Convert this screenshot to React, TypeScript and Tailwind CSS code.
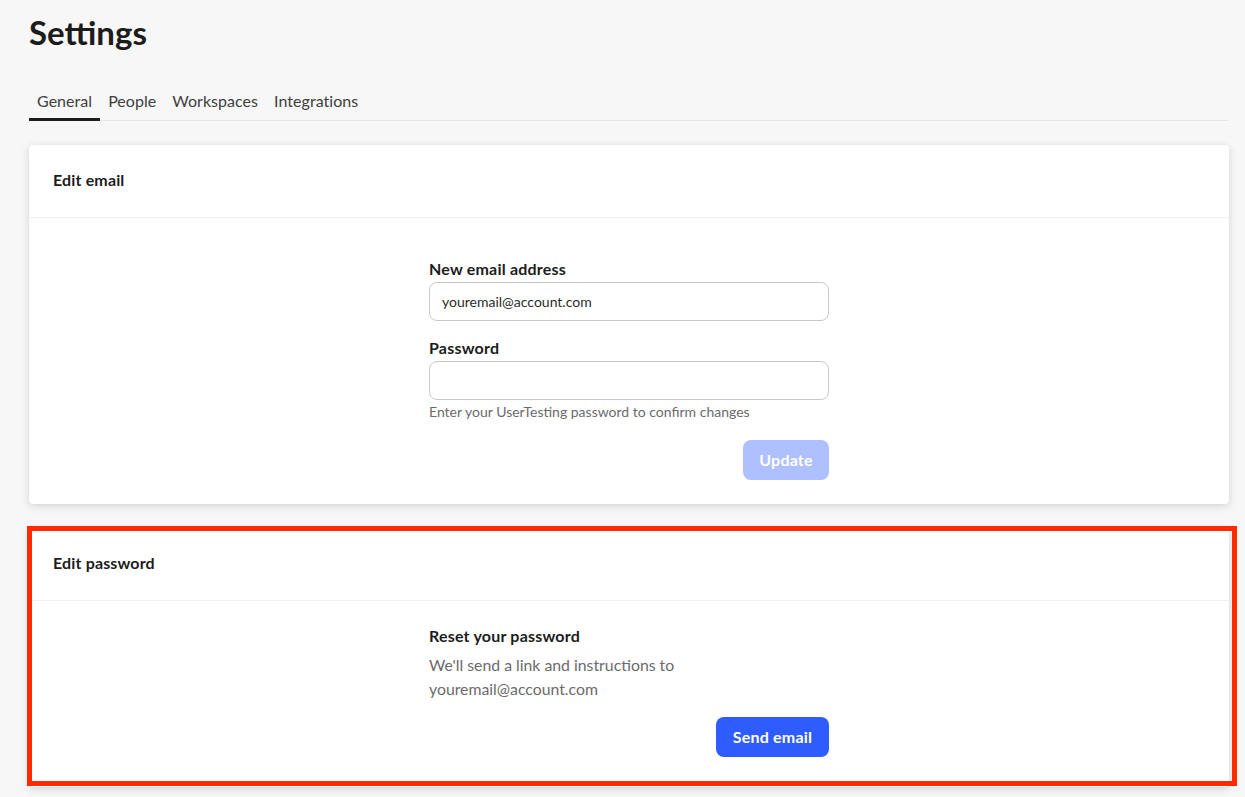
const Field = ({ label, value }: { label: string; value?: string }) => (
    <div>
        <div className="text-[16px] leading-[20px] font-bold tracking-[0.2px] text-[#1c1c1c]">{label}</div>
        <div className="mt-[3px] h-[39px] flex items-center px-3 bg-white border border-[#c8c8c8] rounded-lg text-[14px] text-[#2b2b2b]">
            {value}
        </div>
    </div>
);

const Card = ({ title, children }: { title: string; children: React.ReactNode }) => (
    <section className="bg-white rounded-[4px] shadow-[0_2px_8px_rgba(0,0,0,0.15)]">
        <div className="h-[73px] flex items-center pl-6 pb-[2px] border-b border-[#f0f0f0] text-[16px] font-bold tracking-[0.15px] text-[#1c1c1c]">
            {title}
        </div>
        <div className="w-[400px] ml-[400px]">{children}</div>
    </section>
);

export default function App() {
    return (
        <div className="relative h-[797px] overflow-hidden bg-[#f7f7f7] pl-[29px] pr-4 font-['Lato','Liberation_Sans',sans-serif]">
            <h1 className="pt-[12px] text-[33px] leading-[40px] font-bold text-[#1c1c1c]">Settings</h1>

            <nav className="mt-[30px] flex border-b border-[#e6e6e6] text-[16px] tracking-[0.04px] text-[#404040]">
                <div className="h-[39px] px-2 pt-[7px] border-b-[3px] border-[#1c1c1c] -mb-px">General</div>
                <div className="h-[38px] px-2 pt-[7px]">People</div>
                <div className="h-[38px] px-2 pt-[7px]">Workspaces</div>
                <div className="h-[38px] px-2 pt-[7px]">Integrations</div>
            </nav>

            <div className="mt-6 flex flex-col gap-6">
                <Card title="Edit email">
                    <div className="pt-[41px] pb-6">
                        <Field label="New email address" value="youremail@account.com" />
                        <div className="mt-[17px]">
                            <Field label="Password" />
                        </div>
                        <p className="mt-[3px] text-[14px] leading-[18px] text-[#6b6b6b]">
                            Enter your UserTesting password to confirm changes
                        </p>
                        <div className="mt-[19px] flex justify-end">
                            <button className="h-10 w-[86px] rounded-lg bg-[#aec0ff] text-[16px] font-bold tracking-[0.2px] text-white">
                                Update
                            </button>
                        </div>
                    </div>
                </Card>

                <Card title="Edit password">
                    <div className="pt-[25px] pb-[30px]">
                        <div className="text-[16px] leading-[20px] font-bold tracking-[0.2px] text-[#1c1c1c]">Reset your password</div>
                        <p className="mt-[7px] text-[15.8px] leading-[24px] text-[#6b6b6b]">
                            We'll send a link and instructions to
                            <br />
                            youremail@account.com
                        </p>
                        <div className="mt-[16px] flex justify-end">
                            <button className="h-10 w-[113px] rounded-lg bg-[#2f5cff] text-[16px] font-bold tracking-[0.2px] text-white">
                                Send email
                            </button>
                        </div>
                    </div>
                </Card>
            </div>

            {/* annotation frame drawn over the second card */}
            <div className="absolute left-[27px] top-[526px] w-[1210px] h-[260px] border-[5px] border-[#ff2a00] pointer-events-none" />
        </div>
    );
}
